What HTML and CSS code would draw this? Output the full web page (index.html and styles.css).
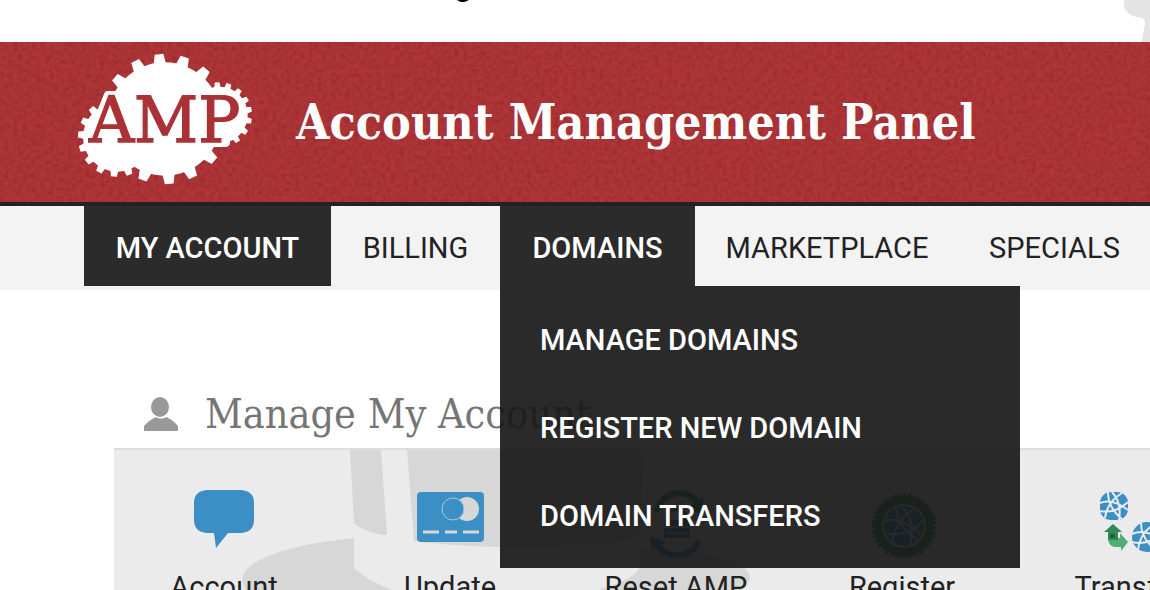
FILE: index.html
```
<!DOCTYPE html>
<html lang="en">
<head>
  <meta charset="UTF-8">
  <meta name="viewport" content="width=device-width, initial-scale=1.0">
  <title>Account Management Panel</title>
  <link rel="stylesheet" href="styles.css">
</head>
<body>
  <div class="top-strip">
    <span class="top-text">g</span>
    <svg class="top-mark" viewBox="0 0 30 42" aria-hidden="true">
      <path fill="#e4e4e4" d="M4 0C2 8 8 16 17 17C23 17 25 19 25 24C24 30 22 36 22 42H30V0Z"/>
    </svg>
  </div>

  <header class="banner">
    <svg class="banner-texture" aria-hidden="true">
      <filter id="grain" x="0" y="0" width="100%" height="100%">
        <feTurbulence type="fractalNoise" baseFrequency="0.22" numOctaves="3" seed="4"/>
        <feColorMatrix values="0 0 0 0 0.5  0 0 0 0 0.08  0 0 0 0 0.1  1.6 0 0 0 -0.6"/>
      </filter>
      <rect width="100%" height="100%" filter="url(#grain)"/>
    </svg>
    <svg class="logo" viewBox="48 36 534 402" role="img" aria-label="AMP">
      <defs>
        <path id="big-tooth" d="M163 -19L195 -13V13L163 19Z"/>
        <path id="mid-tooth" d="M98 -12L118 -9V9L98 12Z"/>
        <path id="small-tooth" d="M80 -10L98 -7V7L80 10Z"/>
      </defs>
      <g fill="#fff" transform="translate(314 237)">
        <circle r="170"/>
        <use href="#big-tooth" transform="rotate(-140)"/>
        <use href="#big-tooth" transform="rotate(-117)"/>
        <use href="#big-tooth" transform="rotate(-95)"/>
        <use href="#big-tooth" transform="rotate(-72)"/>
        <use href="#big-tooth" transform="rotate(-50)"/>
        <use href="#big-tooth" transform="rotate(40)"/>
        <use href="#big-tooth" transform="rotate(64)"/>
        <use href="#big-tooth" transform="rotate(86)"/>
        <use href="#big-tooth" transform="rotate(110)"/>
      </g>
      <g fill="#fff" transform="translate(172 292)">
        <circle r="103"/>
        <use href="#mid-tooth" transform="rotate(72)"/>
        <use href="#mid-tooth" transform="rotate(95)"/>
        <use href="#mid-tooth" transform="rotate(118)"/>
        <use href="#mid-tooth" transform="rotate(141)"/>
        <use href="#mid-tooth" transform="rotate(163)"/>
        <use href="#mid-tooth" transform="rotate(184)"/>
        <use href="#mid-tooth" transform="rotate(206)"/>
        <use href="#mid-tooth" transform="rotate(228)"/>
      </g>
      <g fill="#fff" transform="translate(478 225)">
        <circle r="85"/>
        <use href="#small-tooth" transform="rotate(-94)"/>
        <use href="#small-tooth" transform="rotate(-73)"/>
        <use href="#small-tooth" transform="rotate(-51)"/>
        <use href="#small-tooth" transform="rotate(-30)"/>
        <use href="#small-tooth" transform="rotate(-10)"/>
        <use href="#small-tooth" transform="rotate(11)"/>
        <use href="#small-tooth" transform="rotate(33)"/>
        <use href="#small-tooth" transform="rotate(55)"/>
      </g>
      <!-- plate under the lettering -->
      <path fill="#fff" d="M180 153H143Q134 154 131 164L112 212L160 300H400V321H498Q508 320 510 310V295L540 240L480 150Z"/>
      <text class="logo-text" x="314" y="307" text-anchor="middle">AMP</text>
    </svg>
    <h1 class="banner-title">Account Management Panel</h1>
  </header>

  <nav class="nav">
    <ul class="nav-list">
      <li class="nav-item active"><a href="#">MY ACCOUNT</a></li>
      <li class="nav-item"><a href="#">BILLING</a></li>
      <li class="nav-item active">
        <a href="#">DOMAINS</a>
        <ul class="dropdown">
          <li><a href="#">MANAGE DOMAINS</a></li>
          <li><a href="#">REGISTER NEW DOMAIN</a></li>
          <li><a href="#">DOMAIN TRANSFERS</a></li>
        </ul>
      </li>
      <li class="nav-item"><a href="#">MARKETPLACE</a></li>
      <li class="nav-item"><a href="#">SPECIALS</a></li>
    </ul>
  </nav>

  <main class="content">
    <div class="section-head">
      <svg class="person" viewBox="0 0 34 34" aria-hidden="true">
        <path fill="#999" d="M0 34V29C4 24 10 21 12 20C15 22 19 22 22 20C25 21 30 24 34 29V34Z"/>
        <ellipse cx="16" cy="10" rx="9" ry="10" fill="#999"/>
      </svg>
      <h2 class="section-title">Manage My Account</h2>
    </div>

    <div class="panel">
      <!-- watermark behind the tiles -->
      <svg class="panel-mark" viewBox="0 0 700 150" aria-hidden="true">
        <g fill="#d7d7d7">
          <path d="M236 0H267L273 85C260 85 247 79 240 73Z"/>
          <path d="M293 0H530L526 87C460 102 350 98 300 91Z"/>
          <path d="M240 88C180 94 134 108 129 126C127 134 132 142 140 150H310C280 142 255 132 240 118Z"/>
          <path d="M526 99C585 99 635 112 636 126C636 134 625 144 612 150H440C490 141 526 128 526 115Z"/>
        </g>
      </svg>
      <div class="tiles">
        <a class="tile" href="#">
          <svg class="icon" viewBox="0 0 68 68" aria-hidden="true">
            <path fill="#3c8fc4" d="M17 0H51Q64 1 64 13V30Q64 42 51 43H38L26 58L24 43H17Q4 42 4 30V13Q4 1 17 0Z"/>
          </svg>
          <span>Account</span>
        </a>
        <a class="tile" href="#">
          <svg class="icon" viewBox="0 0 68 68" aria-hidden="true">
            <rect x="1" y="2" width="67" height="50" rx="4" fill="#3c8fc4"/>
            <circle cx="51" cy="19" r="12" fill="#d7d7d7"/>
            <circle cx="37" cy="19" r="11" fill="#3c8fc4" stroke="#a9c6da" stroke-width="1"/>
            <path stroke="#d7d7d7" stroke-width="3" d="M7 42H23M29 42H41M47 42H63"/>
          </svg>
          <span>Update</span>
        </a>
        <a class="tile" href="#">
          <svg class="icon" viewBox="0 0 68 68" aria-hidden="true">
            <path fill="none" stroke="#2f8a57" stroke-width="6" d="M14 22C22 -1 46 -2 56 13"/>
            <path fill="#2f8a57" d="M61 7V25L45 18Z"/>
            <path fill="none" stroke="#3c8fc4" stroke-width="6" d="M15 54C25 70 49 69 57 51"/>
            <path fill="#3c8fc4" d="M8 46L24 52L10 61Z"/>
            <path fill="#3c8fc4" d="M22 30H48V36H22ZM22 38H48V48H22Z"/>
            <path fill="none" stroke="#3c8fc4" stroke-width="4" d="M27 30V24Q35 14 43 24V30"/>
            <path stroke="#d7d7d7" stroke-width="2" d="M25 43H46"/>
          </svg>
          <span>Reset AMP</span>
        </a>
        <a class="tile" href="#">
          <svg class="icon" viewBox="0 0 68 68" aria-hidden="true">
            <circle cx="36" cy="36" r="26" fill="none" stroke="#2f8a57" stroke-width="8"/>
            <circle cx="36" cy="36" r="31" fill="none" stroke="#2f8a57" stroke-width="3" stroke-dasharray="3 2"/>
            <circle cx="36" cy="36" r="20" fill="#3c8fc4"/>
            <path fill="none" stroke="#ebebeb" stroke-width="2" d="M17 31Q32 26 53 44M28 18Q30 38 50 50M46 19Q28 30 24 52M18 43Q38 48 55 31M33 17Q49 30 42 55"/>
          </svg>
          <span>Register</span>
        </a>
        <a class="tile" href="#">
          <svg class="icon" viewBox="0 0 68 68" aria-hidden="true">
            <g fill="#3c8fc4">
              <rect x="6" y="2" width="28" height="28" rx="11"/>
              <circle cx="53" cy="47" r="15"/>
            </g>
            <g fill="none" stroke="#ebebeb" stroke-width="2">
              <path d="M6 13Q18 8 34 20M14 2Q14 18 28 29M28 3Q13 12 11 28M6 21Q21 24 34 12M18 2Q28 13 25 30"/>
              <path d="M38 44Q51 38 68 50M47 33Q47 49 62 60M61 34Q46 42 44 60M38 52Q54 56 68 43"/>
            </g>
            <path fill="#52ad76" d="M14 48H26V43L34 52L27 61V57H20Q14 55 14 48Z"/>
            <path fill="#2f8a57" d="M19 34L28 42H24V50H14V42H10Z"/>
            <path fill="#12693a" d="M16 44H21V48H16Z"/>
          </svg>
          <span>Transfer</span>
        </a>
      </div>
    </div>
  </main>
</body>
</html>
```
FILE: styles.css
```
* {
  box-sizing: border-box;
}

body {
  margin: 0;
  height: 100vh;
  overflow: hidden;
  background: #fff;
  color: #222;
  font-family: Roboto, "Liberation Sans", sans-serif;
  font-size: 29px;
}

h1, h2, ul {
  margin: 0;
  padding: 0;
}

ul {
  list-style: none;
}

a {
  color: inherit;
  text-decoration: none;
}

/* strip above the banner */
.top-strip {
  display: flex;
  justify-content: space-between;
  align-items: flex-start;
  height: 42px;
  overflow: hidden;
}

.top-text {
  margin: -38px 0 0 453px;
  font-size: 36px;
  line-height: 40px;
  color: #000;
}

.top-mark {
  width: 30px;
  height: 42px;
}

/* banner */
.banner {
  position: relative;
  display: flex;
  align-items: flex-start;
  gap: 42px;
  height: 164px;
  padding: 10px 0 0 76px;
  background: #ae3639;
  border-bottom: 4px solid #222;
}

.banner-texture {
  position: absolute;
  inset: 0;
  width: 100%;
  height: 100%;
  opacity: 0.45;
  color-interpolation-filters: sRGB;
}

.logo {
  position: relative;
  flex: none;
  width: 178px;
  height: 134px;
}

.logo-text {
  font-family: "DejaVu Serif", serif;
  font-size: 188px;
  fill: #aa3236;
  stroke: #aa3236;
  stroke-width: 4px;
}

.banner-title {
  position: relative;
  padding-top: 38px;
  font-family: "DejaVu Serif Condensed", "DejaVu Serif", serif;
  font-size: 48px;
  line-height: 64px;
  color: #fff;
  white-space: nowrap;
}

/* main menu */
.nav {
  height: 84px;
  padding-left: 84px;
  background: #f3f3f3;
}

.nav-list {
  display: grid;
  grid-template-columns: 247px 169px 195px 264px 191px;
}

.nav-item {
  position: relative;
  text-align: center;
}

.nav-item > a {
  display: block;
  padding-top: 4px;
  line-height: 76px;
}

.nav-item.active > a {
  background: #2b2b2b;
  color: #fff;
  font-weight: 500;
}

.dropdown {
  position: absolute;
  top: 100%;
  left: 0;
  z-index: 10;
  width: 520px;
  padding: 10px 0 8px;
  background: rgba(24, 24, 24, 0.92);
  text-align: left;
}

.dropdown a {
  display: block;
  padding: 0 40px;
  line-height: 88px;
  font-weight: 500;
  color: #fff;
}

/* account section */
.content {
  padding: 90px 0 0 114px;
}

.section-head {
  display: flex;
  align-items: center;
  gap: 27px;
  height: 68px;
  padding-left: 30px;
}

.person {
  width: 34px;
  height: 34px;
}

.section-title {
  font-family: "DejaVu Serif Condensed", "DejaVu Serif", serif;
  font-size: 41px;
  font-weight: 400;
  color: #757575;
}

.panel {
  position: relative;
  border-top: 2px solid #ddd;
  background: #ebebeb;
  overflow: hidden;
}

.panel-mark {
  position: absolute;
  top: 0;
  left: 0;
  width: 700px;
  height: 150px;
}

.tiles {
  position: relative;
  display: grid;
  grid-template-columns: repeat(5, 220px);
  column-gap: 6px;
  padding: 40px 0;
}

.tile {
  display: flex;
  flex-direction: column;
  align-items: center;
  gap: 12px;
}

.icon {
  width: 68px;
  height: 68px;
}
```
